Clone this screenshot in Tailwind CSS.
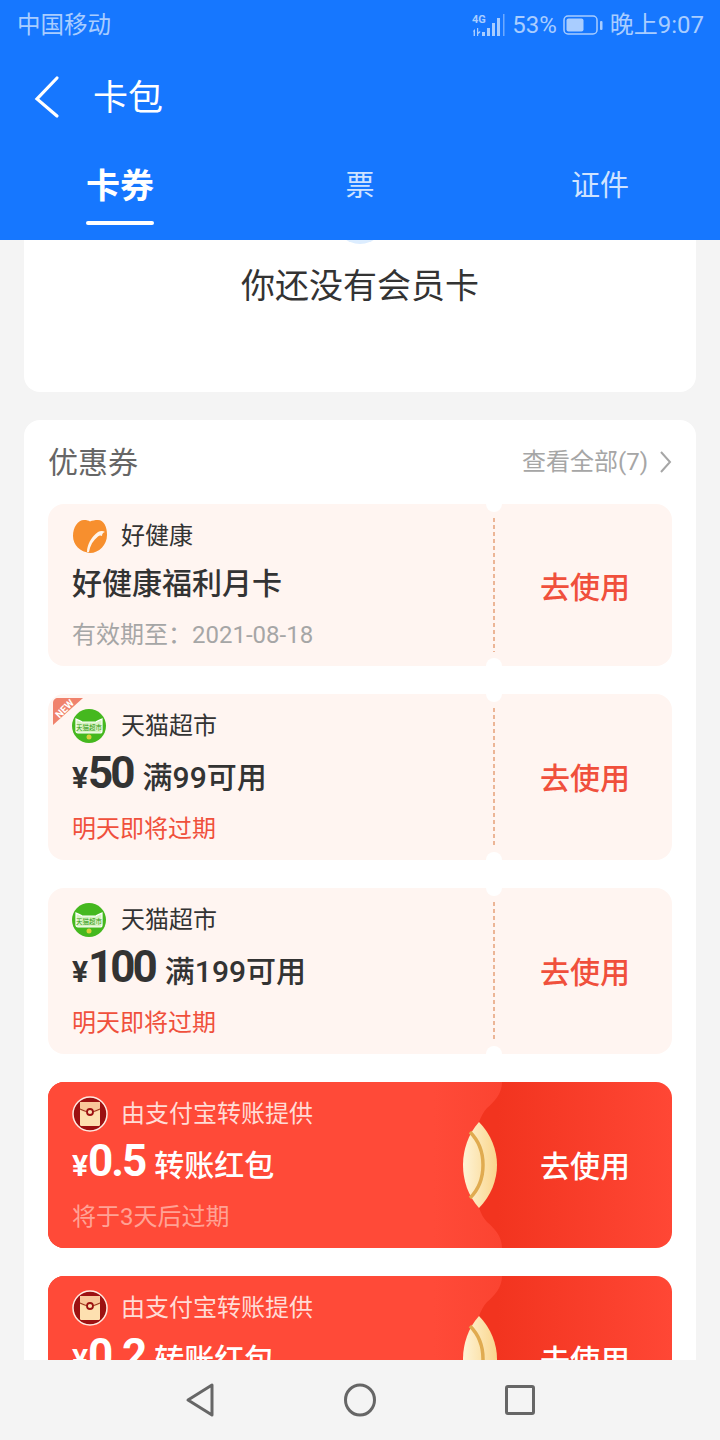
<!DOCTYPE html>
<html lang="zh-CN">
<head>
    <meta charset="UTF-8">
    <meta name="viewport" content="width=device-width, initial-scale=1.0">
    <title>卡包</title>
    <script src="https://cdn.jsdelivr.net/npm/@tailwindcss/browser@4"></script>
</head>
<body class="m-0">
<div class="w-[720px] h-[1440px] flex flex-col overflow-hidden bg-[#f4f4f4] font-[Roboto,'Noto_Sans_CJK_SC',sans-serif]">

    <!-- Header -->
    <header class="h-[240px] shrink-0 bg-[#1677ff] text-white">
        <div class="h-[50px] pl-[17px] pr-[16px] flex items-center justify-between text-[24px] leading-[50px] text-[#a9cdff]">
            <span class="text-[23.5px]">中国移动</span>
            <div class="flex items-center">
                <svg width="36" height="24" viewBox="0 0 36 24" fill="#a9cdff">
                    <text x="0" y="10" font-size="11" font-weight="700" font-family="Roboto">4G</text>
                    <path d="M1 18l2-2v7H1.6v-4zM5 15h1.2v4l2-1v1.5l-2 1.5v2H5z"/>
                    <rect x="10" y="19" width="3" height="4"/>
                    <rect x="15" y="15" width="3" height="8"/>
                    <rect x="20" y="10" width="3" height="13"/>
                    <rect x="25" y="5" width="3" height="18"/>
                    <rect x="31" y="1" width="1.5" height="22" opacity=".6"/>
                </svg>
                <span class="ml-[4px]">53%</span>
                <svg class="ml-[6px]" width="40" height="22" viewBox="0 0 40 22">
                    <rect x="1" y="2" width="33" height="18" rx="4" fill="none" stroke="#a9cdff" stroke-width="1.5"/>
                    <rect x="3.5" y="4.5" width="17" height="13" rx="2" fill="#a9cdff"/>
                    <rect x="37" y="7" width="2.5" height="9" rx="1" fill="#a9cdff"/>
                </svg>
                <span class="ml-[7px]">晚上9:07</span>
            </div>
        </div>
        <div class="h-[94px] flex items-center">
            <svg class="ml-[34px]" width="28" height="44" viewBox="0 0 28 44" fill="none">
                <path d="M23 3L3 24l20 17" stroke="#fff" stroke-width="3.2" stroke-linecap="round" stroke-linejoin="miter"/>
            </svg>
            <span class="ml-[31px] pt-[4px] text-[35px] leading-[44px]">卡包</span>
        </div>
        <nav class="flex h-[96px]">
            <div class="w-[240px] flex flex-col items-center">
                <span class="text-[34px] leading-[84px] h-[77px] font-bold">卡券</span>
                <span class="w-[68px] h-[4px] rounded-[2px] bg-white"></span>
            </div>
            <div class="w-[240px] text-center text-[29px] leading-[84px] text-[#cfe3ff]">票</div>
            <div class="w-[240px] text-center text-[29px] leading-[84px] text-[#cfe3ff]">证件</div>
        </nav>
    </header>

    <!-- Scrolling content -->
    <main class="h-[1120px] shrink-0 overflow-hidden px-[24px]">
        <section class="h-[152px] bg-white rounded-b-[16px] flex flex-col items-center">
            <div class="h-[4px] w-[50px] overflow-hidden">
                <div class="w-[50px] h-[50px] -mt-[46px] rounded-full bg-[#dcedff]"></div>
            </div>
            <p class="mt-[18px] text-[34px] leading-[48px] text-[#333]">你还没有会员卡</p>
        </section>

        <section class="mt-[28px] bg-white rounded-[16px] px-[24px]">
            <div class="h-[84px] flex items-center justify-between">
                <h2 class="text-[30px] font-normal text-[#666]">优惠券</h2>
                <div class="flex items-center text-[24px] text-[#a6a6a6]">
                    <span>查看全部(7)</span>
                    <svg class="ml-[11px]" width="13" height="22" viewBox="0 0 13 22" fill="none">
                        <path d="M2 1l9 10L2 21" stroke="#a6a6a6" stroke-width="2"/>
                    </svg>
                </div>
            </div>

            <div class="flex flex-col gap-[28px]">
                <!-- 好健康 -->
                <article class="relative h-[162px] rounded-[16px] bg-[#fff5f1] overflow-hidden">
                    <div class="pl-[24px] pt-[14px]">
                        <div class="h-[36px] flex items-center text-[24px] text-[#333]">
                            <svg width="36" height="36" viewBox="0 0 36 36">
                                <path d="M18 35C8 34 1 27 1 18 1 9 6 2 12 2c3 0 4.500.5 6 1.500C20 2.500 23 2 26 2c6 0 9 7 9 15 0 10-8 18-17 18z" fill="#f78f2e"/>
                                <path d="M15 34c0-7 4-15 11-20 2-1 5-1.500 7 0-2 .5-3 2-3 4-1.500-1-3-.5-4 .5-5 4-8 9-9 15.500z" fill="#fff" opacity=".9"/>
                            </svg>
                            <span class="ml-[13px]">好健康</span>
                        </div>
                        <div class="mt-[8px] h-[44px] leading-[44px] text-[30px] font-medium text-[#333]">好健康福利月卡</div>
                        <div class="mt-[11px] h-[36px] leading-[36px] text-[24px] text-[#a6a6a6]">有效期至：2021-08-18</div>
                    </div>
                    <span class="absolute left-[445px] top-[14px] bottom-[14px] w-[2px] bg-[repeating-linear-gradient(to_bottom,#ecb596_0_4px,transparent_4px_7px)]"></span>
                    <span class="absolute left-[438px] -top-[8px] w-[16px] h-[16px] rounded-full bg-white"></span>
                    <span class="absolute left-[438px] -bottom-[8px] w-[16px] h-[16px] rounded-full bg-white"></span>
                    <span class="absolute left-[492px] top-[62px] text-[30px] leading-[44px] font-medium text-[#f0503c]">去使用</span>
                </article>

                <!-- 天猫超市 50 -->
                <article class="relative h-[166px] rounded-[16px] bg-[#fff5f1] overflow-hidden">
                    <svg class="absolute left-[5px] top-[2px]" width="32" height="32" viewBox="0 0 32 32">
                        <path d="M0 29V7c0-3 2-5 5-5h25z" fill="#f0826c"/>
                    </svg>
                    <span class="absolute left-[2px] top-[10px] w-[30px] text-center text-[10px] leading-[10px] font-bold text-white -rotate-45">NEW</span>
                    <div class="pl-[24px] pt-[14px]">
                        <div class="h-[36px] flex items-center text-[24px] text-[#333]">
                            <svg width="34" height="34" viewBox="0 0 34 34">
                                <circle cx="17" cy="17" r="17" fill="#45b81f"/>
                                <path d="M4 10c3 1.500 5 2 6 3h14c1-1 3-1.500 6-3v12c0 1-.8 2-2 2H6c-1.200 0-2-1-2-2z" fill="#d9f3c4" stroke="#fff" stroke-width="1.200"/>
                                <text x="17" y="21" text-anchor="middle" font-size="6.500" fill="#2f9a10" font-family="Noto Sans CJK SC">天猫超市</text>
                                <circle cx="17" cy="28" r="2.500" fill="#d8cf3a"/>
                            </svg>
                            <span class="ml-[15px]">天猫超市</span>
                        </div>
                        <div class="mt-[4px] h-[50px] flex items-baseline text-[#333] font-medium whitespace-nowrap">
                            <span class="text-[30px] font-bold">¥</span>
                            <span class="text-[44px] leading-[50px] font-bold tracking-[-3px]">50</span>
                            <span class="ml-[10px] text-[30px]">满99可用</span>
                        </div>
                        <div class="mt-[13px] h-[36px] leading-[36px] text-[24px] text-[#f0503c]">明天即将过期</div>
                    </div>
                    <span class="absolute left-[445px] top-[14px] bottom-[14px] w-[2px] bg-[repeating-linear-gradient(to_bottom,#ecb596_0_4px,transparent_4px_7px)]"></span>
                    <span class="absolute left-[438px] -top-[8px] w-[16px] h-[16px] rounded-full bg-white"></span>
                    <span class="absolute left-[438px] -bottom-[8px] w-[16px] h-[16px] rounded-full bg-white"></span>
                    <span class="absolute left-[492px] top-[63px] text-[30px] leading-[44px] font-medium text-[#f0503c]">去使用</span>
                </article>

                <!-- 天猫超市 100 -->
                <article class="relative h-[166px] rounded-[16px] bg-[#fff5f1] overflow-hidden">
                    <div class="pl-[24px] pt-[14px]">
                        <div class="h-[36px] flex items-center text-[24px] text-[#333]">
                            <svg width="34" height="34" viewBox="0 0 34 34">
                                <circle cx="17" cy="17" r="17" fill="#45b81f"/>
                                <path d="M4 10c3 1.500 5 2 6 3h14c1-1 3-1.500 6-3v12c0 1-.8 2-2 2H6c-1.200 0-2-1-2-2z" fill="#d9f3c4" stroke="#fff" stroke-width="1.200"/>
                                <text x="17" y="21" text-anchor="middle" font-size="6.500" fill="#2f9a10" font-family="Noto Sans CJK SC">天猫超市</text>
                                <circle cx="17" cy="28" r="2.500" fill="#d8cf3a"/>
                            </svg>
                            <span class="ml-[15px]">天猫超市</span>
                        </div>
                        <div class="mt-[4px] h-[50px] flex items-baseline text-[#333] font-medium whitespace-nowrap">
                            <span class="text-[30px] font-bold">¥</span>
                            <span class="text-[44px] leading-[50px] font-bold tracking-[-3px]">100</span>
                            <span class="ml-[10px] text-[30px]">满199可用</span>
                        </div>
                        <div class="mt-[13px] h-[36px] leading-[36px] text-[24px] text-[#f0503c]">明天即将过期</div>
                    </div>
                    <span class="absolute left-[445px] top-[14px] bottom-[14px] w-[2px] bg-[repeating-linear-gradient(to_bottom,#ecb596_0_4px,transparent_4px_7px)]"></span>
                    <span class="absolute left-[438px] -top-[8px] w-[16px] h-[16px] rounded-full bg-white"></span>
                    <span class="absolute left-[438px] -bottom-[8px] w-[16px] h-[16px] rounded-full bg-white"></span>
                    <span class="absolute left-[492px] top-[63px] text-[30px] leading-[44px] font-medium text-[#f0503c]">去使用</span>
                </article>

                <!-- 转账红包 0.5 -->
                <article class="relative h-[166px] rounded-[16px] bg-[linear-gradient(to_right,#f2341f_72%,#ff4735)] overflow-hidden text-white">
                    <svg class="absolute left-0 top-0" width="624" height="166" viewBox="0 0 624 166">
                        <defs>
                            <linearGradient id="flap" x1="0" x2="1" y1="0" y2="0">
                                <stop offset=".85" stop-color="#ff4a38"/>
                                <stop offset="1" stop-color="#fb4431"/>
                            </linearGradient>
                            <linearGradient id="coin" x1="0" x2="1" y1="0" y2="0">
                                <stop offset="0" stop-color="#fef3d6"/>
                                <stop offset="1" stop-color="#fad68c"/>
                            </linearGradient>
                        </defs>
                        <path d="M0 0H454C454 12 446 20 439 26C435 30 433 35 431 40V126C433 131 435 136 439 140C446 146 454 154 454 166H0z" fill="url(#flap)"/>
                        <path d="M431 40C443 52 449 68 449 83S443 114 431 126C420 114 415 98 415 83S420 52 431 40z" fill="url(#coin)"/>
                        <path d="M422 50c9 9 13 21 13 33s-4 24-13 33" fill="none" stroke="#e0ab50" stroke-width="3.500"/>
                    </svg>
                    <div class="relative pl-[24px] pt-[14px]">
                        <div class="h-[36px] flex items-center text-[24px] text-[#ffdcd6]">
                            <svg width="36" height="36" viewBox="0 0 36 36">
                                <circle cx="18" cy="18" r="17" fill="#9c1112" stroke="#ffe9e0" stroke-width="1.500"/>
                                <rect x="8" y="6" width="20" height="24" rx="1.500" fill="#fde0b0"/>
                                <path d="M8 6h20v8c-6 4-14 4-20 0z" fill="#f9c79a"/>
                                <path d="M8 13c4 2 7 3 10 3s6-1 10-3" fill="none" stroke="#9c3a20" stroke-width="1.200"/>
                                <circle cx="18" cy="16" r="3" fill="#fde0b0" stroke="#9c1112" stroke-width="1.800"/>
                            </svg>
                            <span class="ml-[13px]">由支付宝转账提供</span>
                        </div>
                        <div class="mt-[4px] h-[50px] flex items-baseline font-medium whitespace-nowrap">
                            <span class="text-[30px] font-bold">¥</span>
                            <span class="text-[44px] leading-[50px] font-bold tracking-[-2px]">0.5</span>
                            <span class="ml-[9px] text-[30px]">转账红包</span>
                        </div>
                        <div class="mt-[13px] h-[36px] leading-[36px] text-[24px] text-[#ffa295]">将于3天后过期</div>
                    </div>
                    <span class="absolute left-[492px] top-[63px] text-[30px] leading-[44px] font-medium text-white">去使用</span>
                </article>

                <!-- 转账红包 0.2, cut off by the nav bar -->
                <article class="relative h-[166px] rounded-[16px] bg-[linear-gradient(to_right,#f2341f_72%,#ff4735)] overflow-hidden text-white">
                    <svg class="absolute left-0 top-0" width="624" height="166" viewBox="0 0 624 166">
                        <path d="M0 0H454C454 12 446 20 439 26C435 30 433 35 431 40V126C433 131 435 136 439 140C446 146 454 154 454 166H0z" fill="url(#flap)"/>
                        <path d="M431 40C443 52 449 68 449 83S443 114 431 126C420 114 415 98 415 83S420 52 431 40z" fill="url(#coin)"/>
                        <path d="M422 50c9 9 13 21 13 33s-4 24-13 33" fill="none" stroke="#e0ab50" stroke-width="3.500"/>
                    </svg>
                    <div class="relative pl-[24px] pt-[14px]">
                        <div class="h-[36px] flex items-center text-[24px] text-[#ffdcd6]">
                            <svg width="36" height="36" viewBox="0 0 36 36">
                                <circle cx="18" cy="18" r="17" fill="#9c1112" stroke="#ffe9e0" stroke-width="1.500"/>
                                <rect x="8" y="6" width="20" height="24" rx="1.500" fill="#fde0b0"/>
                                <path d="M8 6h20v8c-6 4-14 4-20 0z" fill="#f9c79a"/>
                                <path d="M8 13c4 2 7 3 10 3s6-1 10-3" fill="none" stroke="#9c3a20" stroke-width="1.200"/>
                                <circle cx="18" cy="16" r="3" fill="#fde0b0" stroke="#9c1112" stroke-width="1.800"/>
                            </svg>
                            <span class="ml-[13px]">由支付宝转账提供</span>
                        </div>
                        <div class="mt-[4px] h-[50px] flex items-baseline font-medium whitespace-nowrap">
                            <span class="text-[30px] font-bold">¥</span>
                            <span class="text-[44px] leading-[50px] font-bold tracking-[-2px]">0.2</span>
                            <span class="ml-[9px] text-[30px]">转账红包</span>
                        </div>
                    </div>
                    <span class="absolute left-[492px] top-[63px] text-[30px] leading-[44px] font-medium text-white">去使用</span>
                </article>
            </div>
        </section>
    </main>

    <!-- Android nav bar -->
    <footer class="h-[80px] shrink-0 bg-[#f4f4f4] flex items-center justify-center gap-[128px]">
        <svg width="32" height="36" viewBox="0 0 32 36" fill="none">
            <path d="M28 3v30L4 18z" stroke="#666" stroke-width="3" stroke-linejoin="round"/>
        </svg>
        <svg width="32" height="34" viewBox="0 0 32 34" fill="none">
            <ellipse cx="16" cy="17" rx="14.500" ry="15" stroke="#666" stroke-width="3"/>
        </svg>
        <svg width="32" height="32" viewBox="0 0 32 32" fill="none">
            <rect x="2.500" y="2.500" width="27" height="27" rx="1.500" stroke="#666" stroke-width="3"/>
        </svg>
    </footer>
</div>
</body>
</html>
